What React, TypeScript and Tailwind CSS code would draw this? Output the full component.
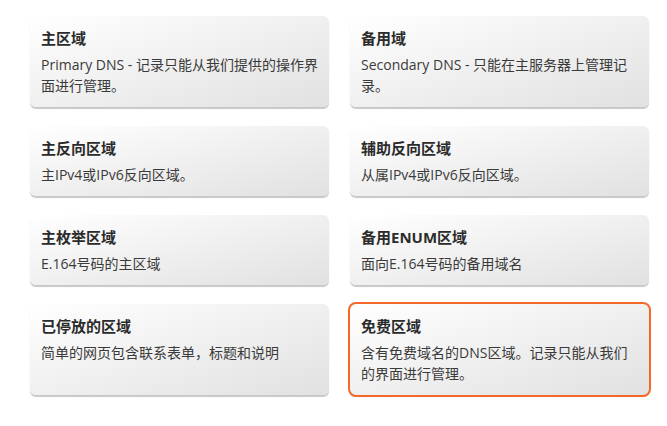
const zones = [
  { title: '主区域', desc: 'Primary DNS - 记录只能从我们提供的操作界面进行管理。' },
  { title: '备用域', desc: 'Secondary DNS - 只能在主服务器上管理记录。' },
  { title: '主反向区域', desc: '主IPv4或IPv6反向区域。' },
  { title: '辅助反向区域', desc: '从属IPv4或IPv6反向区域。' },
  { title: '主枚举区域', desc: 'E.164号码的主区域' },
  { title: '备用ENUM区域', desc: '面向E.164号码的备用域名' },
  { title: '已停放的区域', desc: '简单的网页包含联系表单，标题和说明' },
  { title: '免费区域', desc: '含有免费域名的DNS区域。记录只能从我们的界面进行管理。', active: true },
];

export default function App() {
  return (
    <div className="min-h-[426px] bg-white pl-[30px] pt-4 font-['Open_Sans','Noto_Sans_CJK_SC',sans-serif]">
      <div className="grid w-[619px] grid-cols-2 gap-x-[21px] gap-y-[19px]">
        {zones.map((z) => (
          <div
            key={z.title}
            className={`cursor-pointer rounded-[6px] bg-gradient-to-br from-white to-[#e1e1e1] px-[11px] pt-[11px] pb-[11px] shadow-[0_2px_1px_rgba(0,0,0,0.22)] ${
              z.active ? 'outline-2 outline-[#f4692a]' : ''
            }`}
          >
            <div className="text-[15px] leading-[22px] font-bold text-[#2b2b2b]">{z.title}</div>
            <div className="mt-[5px] text-[14px] leading-[21px] text-[#3a3a3a]">{z.desc}</div>
          </div>
        ))}
      </div>
    </div>
  );
}
